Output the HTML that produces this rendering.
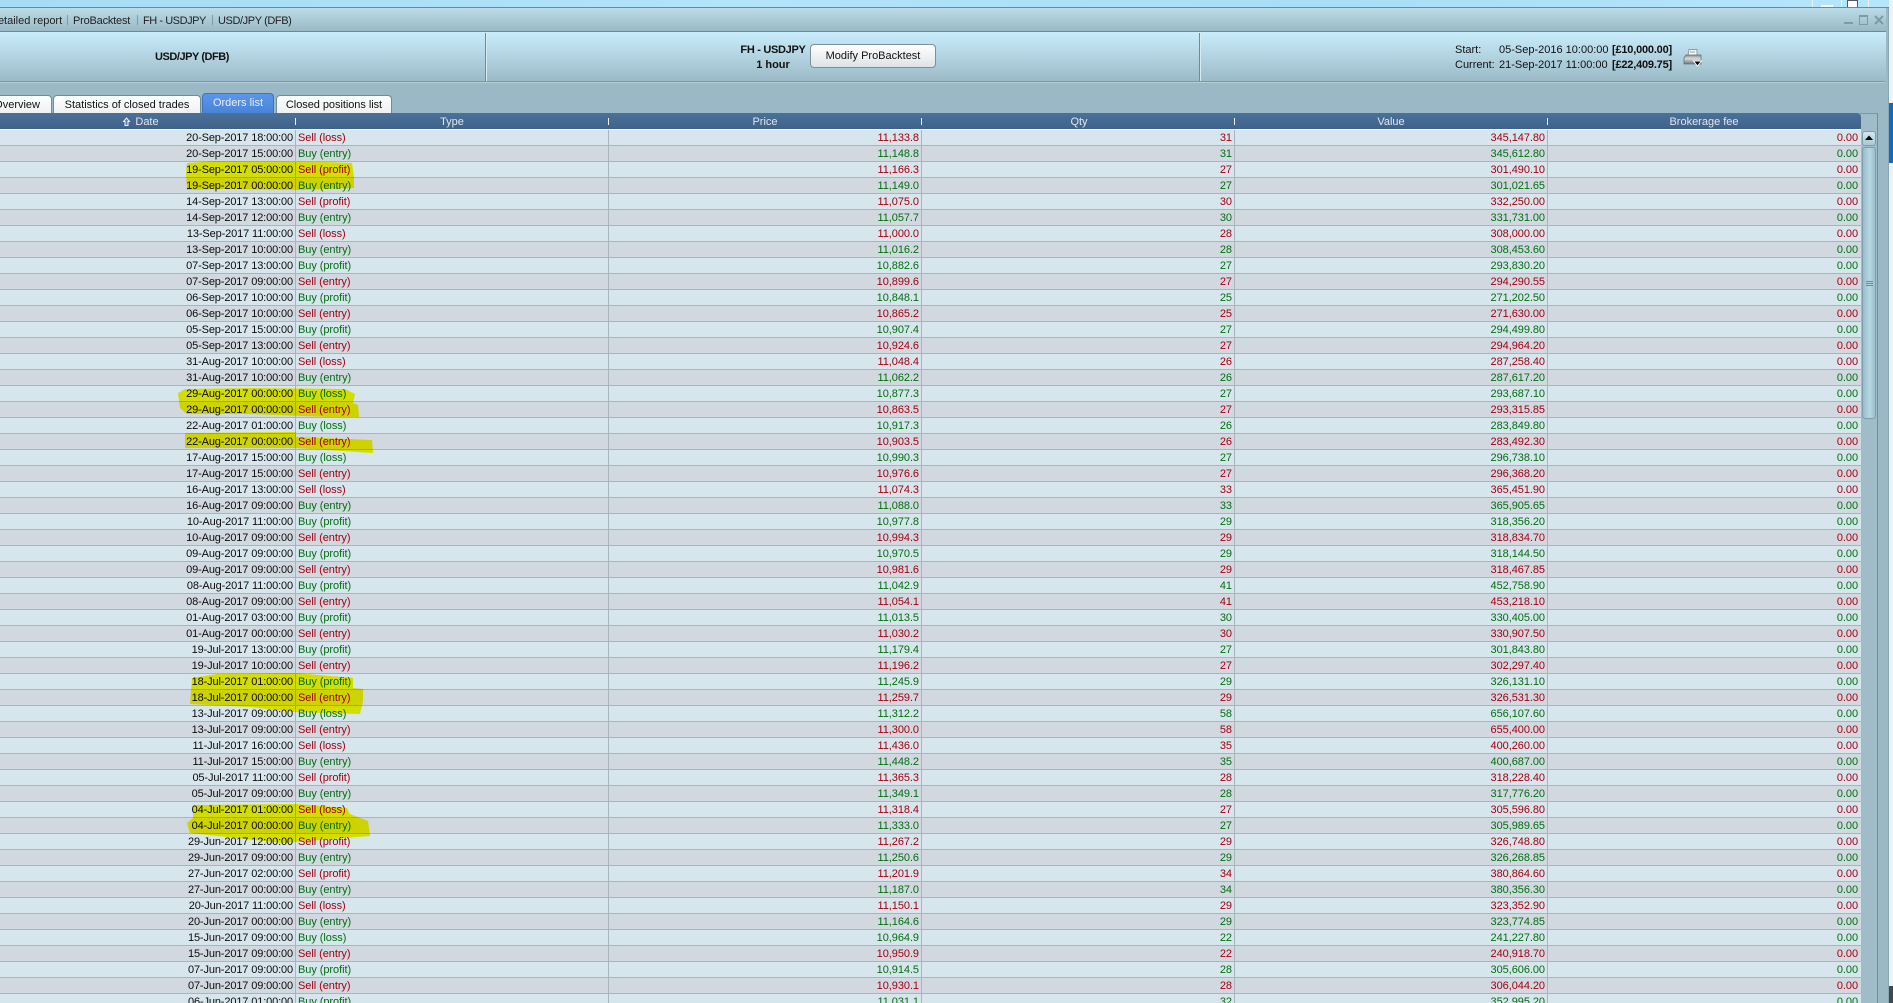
<!DOCTYPE html>
<html><head><meta charset="utf-8"><title>Orders list</title>
<style>
html,body{margin:0;padding:0;width:1893px;height:1003px;overflow:hidden;background:#fff}
body{position:relative;font:11px/14px "Liberation Sans",Arial,sans-serif;color:#111}
.a{position:absolute;white-space:nowrap}
.c{transform:translateX(-50%)}
.b{font-weight:bold}
.tab{position:absolute;box-sizing:border-box;border:1px solid #6f8c99;border-bottom:0;border-radius:4px 4px 0 0;background:linear-gradient(#fff,#eef1f2);line-height:19px;white-space:nowrap;text-align:center;color:#111}
.hd{position:absolute;top:113px;height:16px;line-height:18px;color:#dfe7ef;white-space:nowrap;transform:translateX(-50%)}
.dv{position:absolute;top:118px;width:1px;height:7px;background:#f2f5f8}
table{position:absolute;left:0;top:130px;width:1861px;table-layout:fixed;border-collapse:separate;border-spacing:0}
td{height:14px;padding:1px 2px 0;line-height:14px;border-bottom:1px solid #a9b5bd;border-right:1px solid #a9b5bd;text-align:right;white-space:nowrap;overflow:hidden;box-sizing:content-box;letter-spacing:-.06px}
td:last-child{border-right:0;padding-right:3px}
td:nth-child(2){text-align:left;padding-left:2px}
td:first-child{letter-spacing:-.13px}
tr:nth-child(odd){background:#d7e5ed}
tr:nth-child(even){background:#d1d8e0}
tr.s td{color:#a5000f}
tr.g td{color:#006f10}
tr.s td:first-child,tr.g td:first-child{color:#0c0c0c}
</style></head><body>
<div class="a" style="left:0;top:0;width:1889px;height:7px;background:linear-gradient(90deg,#a6dcf6,#b2e4fa 40%,#a8def8 70%,#b6e6fc)"></div>
<div class="a" style="left:1812px;top:0;width:1px;height:7px;background:#eaf4fa"></div>
<div class="a" style="left:1821px;top:5px;width:12px;height:2px;background:#fff"></div>
<div class="a" style="left:1841px;top:0;width:1px;height:7px;background:#eaf4fa"></div>
<div class="a" style="left:1847px;top:0;width:9px;height:6px;border:1px solid #556;background:#fff"></div>
<div class="a" style="left:1868px;top:0;width:1px;height:7px;background:#eaf4fa"></div>
<div class="a" style="left:1889px;top:0;width:4px;height:1003px;background:#eef2f2"></div>
<div class="a" style="left:1889px;top:103px;width:4px;height:60px;background:#0f6ebc"></div>
<div class="a" style="left:1889px;top:986px;width:4px;height:17px;background:#44484c"></div>

<div class="a" style="left:0;top:7px;width:1889px;height:996px;background:#9ab8c5"></div>
<div class="a" style="left:0;top:7px;width:1889px;height:1px;background:#6d8997"></div>
<div class="a" style="left:0;top:8px;width:1886px;height:23px;background:linear-gradient(#bbdce9,#9bb9c5)"></div>
<div class="a" style="left:0;top:31px;width:1886px;height:1px;background:#6d8997"></div>
<div class="a" style="left:0;top:32px;width:1886px;height:49px;background:linear-gradient(#c9edfc,#9cbac7)"></div>
<div class="a" style="left:0;top:81px;width:1885px;height:1px;background:#7c97a4"></div>
<div class="a" style="left:0;top:82px;width:1885px;height:1px;background:#b5cfd9"></div>
<div class="a" style="left:1888px;top:8px;width:1px;height:995px;background:#8aa6b3"></div>

<div class="a" style="left:-10px;top:14px;width:72px;text-align:right;color:#222">Detailed report</div>
<div class="a" style="left:67px;top:15px;width:1px;height:10px;background:#7f99a6"></div>
<div class="a" style="left:73px;top:14px;color:#222;letter-spacing:-.2px">ProBacktest</div>
<div class="a" style="left:137px;top:15px;width:1px;height:10px;background:#7f99a6"></div>
<div class="a" style="left:143px;top:14px;color:#222;letter-spacing:-.45px">FH - USDJPY</div>
<div class="a" style="left:212px;top:15px;width:1px;height:10px;background:#7f99a6"></div>
<div class="a" style="left:218px;top:14px;color:#222;letter-spacing:-.4px">USD/JPY (DFB)</div>

<div class="a" style="left:1844px;top:22px;width:9px;height:2px;background:#7d9aa8"></div>
<div class="a" style="left:1859px;top:15px;width:7px;height:7px;border:1px solid #7d9aa8;border-top-width:2px"></div>
<svg class="a" style="left:1874px;top:15px" width="10" height="10" viewBox="0 0 10 10"><path d="M1 1L9 9M9 1L1 9" stroke="#7d9aa8" stroke-width="2" fill="none"/></svg>

<div class="a" style="left:485px;top:33px;width:1px;height:48px;background:#6f8b99"></div>
<div class="a" style="left:486px;top:33px;width:1px;height:48px;background:#d8eaf2"></div>
<div class="a" style="left:1199px;top:33px;width:1px;height:48px;background:#6f8b99"></div>
<div class="a" style="left:1200px;top:33px;width:1px;height:48px;background:#d8eaf2"></div>

<div class="a b c" style="left:192px;top:50px;letter-spacing:-.45px">USD/JPY (DFB)</div>
<div class="a b c" style="left:773px;top:43px;letter-spacing:-.3px">FH - USDJPY</div>
<div class="a b c" style="left:773px;top:58px">1 hour</div>
<div class="a" style="left:810px;top:44px;width:126px;height:24px;box-sizing:border-box;border:1px solid #7d8f99;border-radius:4px;background:linear-gradient(#fff,#dfe3e5);text-align:center;line-height:23px;color:#111">Modify ProBacktest</div>

<div class="a" style="left:1455px;top:43px">Start:</div>
<div class="a" style="left:1455px;top:58px">Current:</div>
<div class="a" style="left:1499px;top:43px">05-Sep-2016 10:00:00</div>
<div class="a" style="left:1499px;top:58px">21-Sep-2017 11:00:00</div>
<div class="a b" style="left:1612px;top:43px;letter-spacing:-.2px">[£10,000.00]</div>
<div class="a b" style="left:1612px;top:58px;letter-spacing:-.2px">[£22,409.75]</div>

<svg class="a" style="left:1683px;top:49px" width="19" height="18" viewBox="0 0 19 18">
<defs><linearGradient id="pg" x1="0" y1="0" x2="0" y2="1"><stop offset="0" stop-color="#8a8f92"/><stop offset=".4" stop-color="#d8dcde"/><stop offset="1" stop-color="#6e7376"/></linearGradient></defs>
<path d="M6 .5H14V7H5Z" fill="#f4f6f7" stroke="#8f9a9f"/><path d="M7 3H12" stroke="#99a4a9"/>
<path d="M3 6H18V15H1V9Z" fill="url(#pg)" stroke="#6a6f72" stroke-width=".8"/>
<path d="M10.5 12H18.5L14.5 17Z" fill="#000" stroke="#fff" stroke-width="1"/>
</svg>

<div class="tab" style="left:-20px;top:95px;width:72px;height:18px;text-align:right;padding-right:11px">Overview</div>
<div class="tab" style="left:53px;top:95px;width:148px;height:18px">Statistics of closed trades</div>
<div class="tab" style="left:202px;top:93px;width:72px;height:20px;background:linear-gradient(#5a96ea,#4a84d8);border-color:#3f74bb;color:#e6eefb;line-height:19px">Orders list</div>
<div class="tab" style="left:276px;top:95px;width:116px;height:18px;letter-spacing:-.05px">Closed positions list</div>

<div class="a" style="left:1860px;top:113px;width:17px;height:1px;background:#7b98a5"></div>
<div class="a" style="left:1877px;top:113px;width:1px;height:890px;background:#728e9c"></div>
<div class="a" style="left:1861px;top:114px;width:16px;height:889px;background:#9fbcc8"></div>

<div class="a" style="left:0;top:113px;width:1861px;height:16px;background:linear-gradient(#4c7199,#3e628a);border-radius:0 4px 0 0"></div>
<div class="a" style="left:0;top:129px;width:1861px;height:1px;background:#eef3f6"></div>
<svg class="a" style="left:122px;top:117px" width="9" height="10" viewBox="0 0 9 10"><path d="M4.5 1L7.5 4.5H6V8.5H3V4.5H1.5Z" fill="#5c7fa4" stroke="#f4f7fa" stroke-width="1"/></svg>
<div class="hd" style="left:147px">Date</div>
<div class="hd" style="left:452px">Type</div>
<div class="hd" style="left:765px">Price</div>
<div class="hd" style="left:1079px">Qty</div>
<div class="hd" style="left:1391px">Value</div>
<div class="hd" style="left:1704px">Brokerage fee</div>
<div class="dv" style="left:295px"></div><div class="dv" style="left:608px"></div><div class="dv" style="left:921px"></div><div class="dv" style="left:1234px"></div><div class="dv" style="left:1547px"></div>

<table><colgroup><col style="width:296px"><col style="width:313px"><col style="width:313px"><col style="width:313px"><col style="width:313px"><col style="width:313px"></colgroup>
<tr class="s"><td>20-Sep-2017 18:00:00</td><td>Sell (loss)</td><td>11,133.8</td><td>31</td><td>345,147.80</td><td>0.00</td></tr>
<tr class="g"><td>20-Sep-2017 15:00:00</td><td>Buy (entry)</td><td>11,148.8</td><td>31</td><td>345,612.80</td><td>0.00</td></tr>
<tr class="s"><td>19-Sep-2017 05:00:00</td><td>Sell (profit)</td><td>11,166.3</td><td>27</td><td>301,490.10</td><td>0.00</td></tr>
<tr class="g"><td>19-Sep-2017 00:00:00</td><td>Buy (entry)</td><td>11,149.0</td><td>27</td><td>301,021.65</td><td>0.00</td></tr>
<tr class="s"><td>14-Sep-2017 13:00:00</td><td>Sell (profit)</td><td>11,075.0</td><td>30</td><td>332,250.00</td><td>0.00</td></tr>
<tr class="g"><td>14-Sep-2017 12:00:00</td><td>Buy (entry)</td><td>11,057.7</td><td>30</td><td>331,731.00</td><td>0.00</td></tr>
<tr class="s"><td>13-Sep-2017 11:00:00</td><td>Sell (loss)</td><td>11,000.0</td><td>28</td><td>308,000.00</td><td>0.00</td></tr>
<tr class="g"><td>13-Sep-2017 10:00:00</td><td>Buy (entry)</td><td>11,016.2</td><td>28</td><td>308,453.60</td><td>0.00</td></tr>
<tr class="g"><td>07-Sep-2017 13:00:00</td><td>Buy (profit)</td><td>10,882.6</td><td>27</td><td>293,830.20</td><td>0.00</td></tr>
<tr class="s"><td>07-Sep-2017 09:00:00</td><td>Sell (entry)</td><td>10,899.6</td><td>27</td><td>294,290.55</td><td>0.00</td></tr>
<tr class="g"><td>06-Sep-2017 10:00:00</td><td>Buy (profit)</td><td>10,848.1</td><td>25</td><td>271,202.50</td><td>0.00</td></tr>
<tr class="s"><td>06-Sep-2017 10:00:00</td><td>Sell (entry)</td><td>10,865.2</td><td>25</td><td>271,630.00</td><td>0.00</td></tr>
<tr class="g"><td>05-Sep-2017 15:00:00</td><td>Buy (profit)</td><td>10,907.4</td><td>27</td><td>294,499.80</td><td>0.00</td></tr>
<tr class="s"><td>05-Sep-2017 13:00:00</td><td>Sell (entry)</td><td>10,924.6</td><td>27</td><td>294,964.20</td><td>0.00</td></tr>
<tr class="s"><td>31-Aug-2017 10:00:00</td><td>Sell (loss)</td><td>11,048.4</td><td>26</td><td>287,258.40</td><td>0.00</td></tr>
<tr class="g"><td>31-Aug-2017 10:00:00</td><td>Buy (entry)</td><td>11,062.2</td><td>26</td><td>287,617.20</td><td>0.00</td></tr>
<tr class="g"><td>29-Aug-2017 00:00:00</td><td>Buy (loss)</td><td>10,877.3</td><td>27</td><td>293,687.10</td><td>0.00</td></tr>
<tr class="s"><td>29-Aug-2017 00:00:00</td><td>Sell (entry)</td><td>10,863.5</td><td>27</td><td>293,315.85</td><td>0.00</td></tr>
<tr class="g"><td>22-Aug-2017 01:00:00</td><td>Buy (loss)</td><td>10,917.3</td><td>26</td><td>283,849.80</td><td>0.00</td></tr>
<tr class="s"><td>22-Aug-2017 00:00:00</td><td>Sell (entry)</td><td>10,903.5</td><td>26</td><td>283,492.30</td><td>0.00</td></tr>
<tr class="g"><td>17-Aug-2017 15:00:00</td><td>Buy (loss)</td><td>10,990.3</td><td>27</td><td>296,738.10</td><td>0.00</td></tr>
<tr class="s"><td>17-Aug-2017 15:00:00</td><td>Sell (entry)</td><td>10,976.6</td><td>27</td><td>296,368.20</td><td>0.00</td></tr>
<tr class="s"><td>16-Aug-2017 13:00:00</td><td>Sell (loss)</td><td>11,074.3</td><td>33</td><td>365,451.90</td><td>0.00</td></tr>
<tr class="g"><td>16-Aug-2017 09:00:00</td><td>Buy (entry)</td><td>11,088.0</td><td>33</td><td>365,905.65</td><td>0.00</td></tr>
<tr class="g"><td>10-Aug-2017 11:00:00</td><td>Buy (profit)</td><td>10,977.8</td><td>29</td><td>318,356.20</td><td>0.00</td></tr>
<tr class="s"><td>10-Aug-2017 09:00:00</td><td>Sell (entry)</td><td>10,994.3</td><td>29</td><td>318,834.70</td><td>0.00</td></tr>
<tr class="g"><td>09-Aug-2017 09:00:00</td><td>Buy (profit)</td><td>10,970.5</td><td>29</td><td>318,144.50</td><td>0.00</td></tr>
<tr class="s"><td>09-Aug-2017 09:00:00</td><td>Sell (entry)</td><td>10,981.6</td><td>29</td><td>318,467.85</td><td>0.00</td></tr>
<tr class="g"><td>08-Aug-2017 11:00:00</td><td>Buy (profit)</td><td>11,042.9</td><td>41</td><td>452,758.90</td><td>0.00</td></tr>
<tr class="s"><td>08-Aug-2017 09:00:00</td><td>Sell (entry)</td><td>11,054.1</td><td>41</td><td>453,218.10</td><td>0.00</td></tr>
<tr class="g"><td>01-Aug-2017 03:00:00</td><td>Buy (profit)</td><td>11,013.5</td><td>30</td><td>330,405.00</td><td>0.00</td></tr>
<tr class="s"><td>01-Aug-2017 00:00:00</td><td>Sell (entry)</td><td>11,030.2</td><td>30</td><td>330,907.50</td><td>0.00</td></tr>
<tr class="g"><td>19-Jul-2017 13:00:00</td><td>Buy (profit)</td><td>11,179.4</td><td>27</td><td>301,843.80</td><td>0.00</td></tr>
<tr class="s"><td>19-Jul-2017 10:00:00</td><td>Sell (entry)</td><td>11,196.2</td><td>27</td><td>302,297.40</td><td>0.00</td></tr>
<tr class="g"><td>18-Jul-2017 01:00:00</td><td>Buy (profit)</td><td>11,245.9</td><td>29</td><td>326,131.10</td><td>0.00</td></tr>
<tr class="s"><td>18-Jul-2017 00:00:00</td><td>Sell (entry)</td><td>11,259.7</td><td>29</td><td>326,531.30</td><td>0.00</td></tr>
<tr class="g"><td>13-Jul-2017 09:00:00</td><td>Buy (loss)</td><td>11,312.2</td><td>58</td><td>656,107.60</td><td>0.00</td></tr>
<tr class="s"><td>13-Jul-2017 09:00:00</td><td>Sell (entry)</td><td>11,300.0</td><td>58</td><td>655,400.00</td><td>0.00</td></tr>
<tr class="s"><td>11-Jul-2017 16:00:00</td><td>Sell (loss)</td><td>11,436.0</td><td>35</td><td>400,260.00</td><td>0.00</td></tr>
<tr class="g"><td>11-Jul-2017 15:00:00</td><td>Buy (entry)</td><td>11,448.2</td><td>35</td><td>400,687.00</td><td>0.00</td></tr>
<tr class="s"><td>05-Jul-2017 11:00:00</td><td>Sell (profit)</td><td>11,365.3</td><td>28</td><td>318,228.40</td><td>0.00</td></tr>
<tr class="g"><td>05-Jul-2017 09:00:00</td><td>Buy (entry)</td><td>11,349.1</td><td>28</td><td>317,776.20</td><td>0.00</td></tr>
<tr class="s"><td>04-Jul-2017 01:00:00</td><td>Sell (loss)</td><td>11,318.4</td><td>27</td><td>305,596.80</td><td>0.00</td></tr>
<tr class="g"><td>04-Jul-2017 00:00:00</td><td>Buy (entry)</td><td>11,333.0</td><td>27</td><td>305,989.65</td><td>0.00</td></tr>
<tr class="s"><td>29-Jun-2017 12:00:00</td><td>Sell (profit)</td><td>11,267.2</td><td>29</td><td>326,748.80</td><td>0.00</td></tr>
<tr class="g"><td>29-Jun-2017 09:00:00</td><td>Buy (entry)</td><td>11,250.6</td><td>29</td><td>326,268.85</td><td>0.00</td></tr>
<tr class="s"><td>27-Jun-2017 02:00:00</td><td>Sell (profit)</td><td>11,201.9</td><td>34</td><td>380,864.60</td><td>0.00</td></tr>
<tr class="g"><td>27-Jun-2017 00:00:00</td><td>Buy (entry)</td><td>11,187.0</td><td>34</td><td>380,356.30</td><td>0.00</td></tr>
<tr class="s"><td>20-Jun-2017 11:00:00</td><td>Sell (loss)</td><td>11,150.1</td><td>29</td><td>323,352.90</td><td>0.00</td></tr>
<tr class="g"><td>20-Jun-2017 00:00:00</td><td>Buy (entry)</td><td>11,164.6</td><td>29</td><td>323,774.85</td><td>0.00</td></tr>
<tr class="g"><td>15-Jun-2017 09:00:00</td><td>Buy (loss)</td><td>10,964.9</td><td>22</td><td>241,227.80</td><td>0.00</td></tr>
<tr class="s"><td>15-Jun-2017 09:00:00</td><td>Sell (entry)</td><td>10,950.9</td><td>22</td><td>240,918.70</td><td>0.00</td></tr>
<tr class="g"><td>07-Jun-2017 09:00:00</td><td>Buy (profit)</td><td>10,914.5</td><td>28</td><td>305,606.00</td><td>0.00</td></tr>
<tr class="s"><td>07-Jun-2017 09:00:00</td><td>Sell (entry)</td><td>10,930.1</td><td>28</td><td>306,044.20</td><td>0.00</td></tr>
<tr class="g"><td>06-Jun-2017 01:00:00</td><td>Buy (profit)</td><td>11,031.1</td><td>32</td><td>352,995.20</td><td>0.00</td></tr>
</table>

<div class="a" style="left:1862px;top:131px;width:14px;height:15px;box-sizing:border-box;border:1px solid #7f9dab;border-radius:3px;background:linear-gradient(#d2e8f1,#a8c9d6)"></div>
<svg class="a" style="left:1864px;top:135px" width="10" height="6" viewBox="0 0 10 6"><path d="M5 .5L9 5H1Z" fill="#000"/></svg>
<div class="a" style="left:1862px;top:147px;width:14px;height:272px;box-sizing:border-box;border:1px solid #7f9dab;border-radius:3px;background:linear-gradient(90deg,#98bccb,#b6d8e4 55%,#9cbfcd)"></div>
<div class="a" style="left:1866px;top:281px;width:7px;height:1px;background:#6f8a97;box-shadow:0 2px 0 #6f8a97,0 4px 0 #6f8a97"></div>

<svg class="a" style="left:0;top:0;mix-blend-mode:multiply;pointer-events:none" width="1893" height="1003" viewBox="0 0 1893 1003">
<g fill="#fbf800">
<path d="M187 163L215 161L325 162L352 163L354 177L354 188L300 190L225 189L187 190L186 172Z"/>
<path d="M185 389L250 388L345 389L355 394L353 403L358 405L359 417L330 417L250 414L187 414L180 408L178 393Z"/>
<path d="M185 433L296 432L296 437L372 440L373 453L296 448L185 448Z"/>
<path d="M192 678L217 674L296 673L353 678L353 688L363 689L363 701L360 714L293 712L250 707L190 704Z"/>
<path d="M193 805L296 804L347 808L350 814L368 821L370 836L283 843L190 833L187 823L193 818Z"/>
</g>
</svg>
</body></html>
